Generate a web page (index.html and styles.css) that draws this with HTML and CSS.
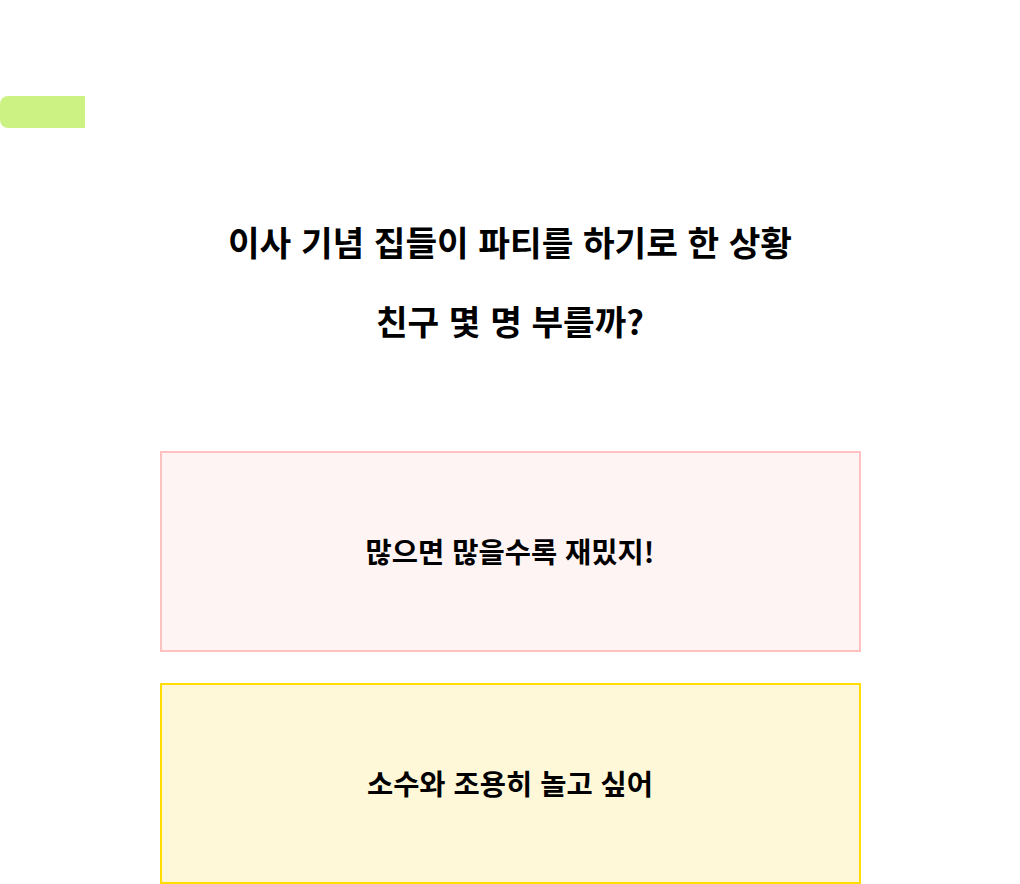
FILE: index.html
```html
<!DOCTYPE html>
<html lang="ko">
<head>
<meta charset="utf-8">
<link rel="stylesheet" href="styles.css">
</head>
<body>
<div class="page">
  <div class="progress"><div class="progress-fill"></div></div>
  <div class="question">
    <p class="q-line">이사 기념 집들이 파티를 하기로 한 상황</p>
    <p class="q-line">친구 몇 명 부를까?</p>
  </div>
  <div class="answers">
    <button class="answer answer-a">많으면 많을수록 재밌지!</button>
    <button class="answer answer-b">소수와 조용히 놀고 싶어</button>
  </div>
</div>
</body>
</html>
```
FILE: styles.css
```css
html, body {
  margin: 0;
  padding: 0;
  background: #ffffff;
}
body {
  font-family: "Noto Sans CJK KR", "Noto Sans", sans-serif;
  color: #000;
}
.page {
  padding-top: 96px;
}
.progress {
  height: 32px;
  width: 100%;
}
.progress-fill {
  width: 85px;
  height: 32px;
  background: #ccf284;
  border-radius: 8px 0 0 8px;
}
.question {
  padding-top: 74px;
  text-align: center;
}
.q-line {
  margin: 0;
  font-size: 34.4px;
  font-weight: 700;
  line-height: 79px;
}
.answers {
  display: flex;
  flex-direction: column;
  align-items: center;
  gap: 31px;
  padding-top: 91px;
}
.answer {
  width: 701px;
  height: 201px;
  box-sizing: border-box;
  font-family: inherit;
  font-size: 28.5px;
  font-weight: 700;
  color: #000;
  cursor: pointer;
  padding: 0 0 3px;
}
.answer-a {
  background: #fff4f4;
  border: 2px solid #ffc0c0;
}
.answer-b {
  background: #fff8d8;
  border: 2px solid #ffdd00;
}
```
